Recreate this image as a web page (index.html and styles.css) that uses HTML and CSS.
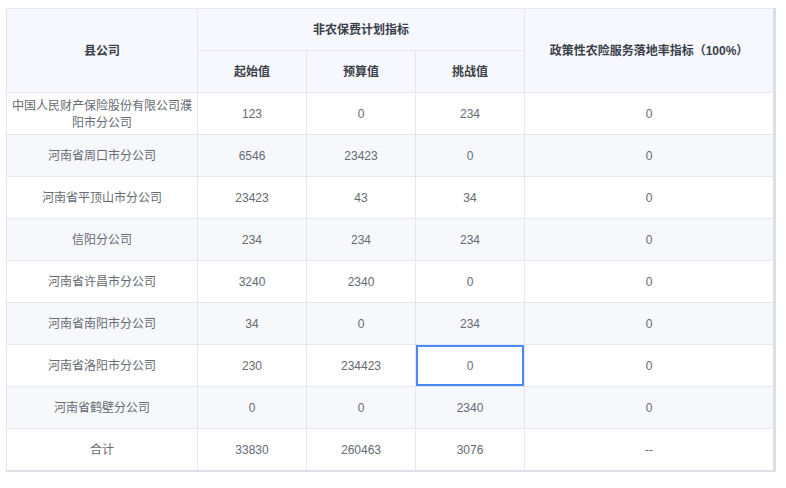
FILE: index.html
```html
<!DOCTYPE html>
<html lang="zh">
<head>
<meta charset="utf-8">
<link rel="stylesheet" href="styles.css">
</head>
<body>
<div class="wrap">
<table class="grid">
<colgroup>
<col class="c1"><col class="c2"><col class="c3"><col class="c4"><col class="c5">
</colgroup>
<thead>
<tr>
<th rowspan="2">县公司</th>
<th colspan="3">非农保费计划指标</th>
<th rowspan="2">政策性农险服务落地率指标（100%）</th>
</tr>
<tr>
<th>起始值</th><th>预算值</th><th>挑战值</th>
</tr>
</thead>
<tbody>
<tr><td class="name">中国人民财产保险股份有限公司濮阳市分公司</td><td>123</td><td>0</td><td>234</td><td>0</td></tr>
<tr class="alt"><td>河南省周口市分公司</td><td>6546</td><td>23423</td><td>0</td><td>0</td></tr>
<tr><td>河南省平顶山市分公司</td><td>23423</td><td>43</td><td>34</td><td>0</td></tr>
<tr class="alt"><td>信阳分公司</td><td>234</td><td>234</td><td>234</td><td>0</td></tr>
<tr><td>河南省许昌市分公司</td><td>3240</td><td>2340</td><td>0</td><td>0</td></tr>
<tr class="alt"><td>河南省南阳市分公司</td><td>34</td><td>0</td><td>234</td><td>0</td></tr>
<tr><td>河南省洛阳市分公司</td><td>230</td><td>234423</td><td class="active">0</td><td>0</td></tr>
<tr class="alt"><td>河南省鹤壁分公司</td><td>0</td><td>0</td><td>2340</td><td>0</td></tr>
<tr><td>合计</td><td>33830</td><td>260463</td><td>3076</td><td>--</td></tr>
</tbody>
</table>
</div>
</body>
</html>
```
FILE: styles.css
```css
html, body {
  margin: 0;
  padding: 0;
  background: #ffffff;
}
body {
  font-family: "Liberation Sans", "Noto Sans CJK SC", sans-serif;
  font-size: 12px;
  color: #666a73;
}
.wrap {
  padding: 8px 0 0 6px;
}
.grid {
  border-collapse: collapse;
  table-layout: fixed;
  width: 768px;
  border-right: 3px solid #dcdfe6;
  border-bottom: 2px solid #dcdfe6;
}
.c1 { width: 191px; }
.c2 { width: 109px; }
.c3 { width: 109px; }
.c4 { width: 109px; }
.c5 { width: 250px; }
.grid th,
.grid td {
  border: 1px solid #e4e7f0;
  text-align: center;
  vertical-align: middle;
  padding: 2px 5px 0;
  height: 42px;
  line-height: 17px;
  box-sizing: border-box;
}
.grid th {
  background: #f6f8fd;
  color: #3b3f4a;
  font-weight: 600;
}
.grid td {
  background: #ffffff;
}
.grid tr.alt td {
  background: #f7f8fc;
}
.grid td.active {
  box-shadow: inset 0 0 0 2px #4a8af4;
}
```
